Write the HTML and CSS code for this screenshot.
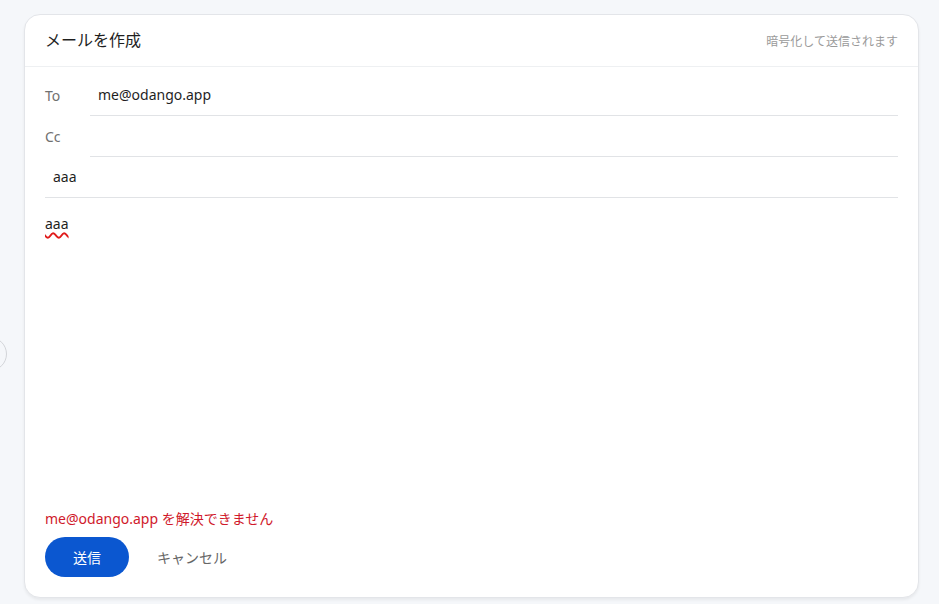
FILE: index.html
```html
<!DOCTYPE html>
<html lang="ja">
<head>
<meta charset="UTF-8">
<meta name="viewport" content="width=device-width, initial-scale=1.0">
<title>メールを作成</title>
<link rel="stylesheet" href="styles.css">
</head>
<body>

<!-- Sidebar toggle, mostly hidden off the left edge -->
<button class="side-toggle" aria-label="メニュー"></button>

<!-- Compose card -->
<div class="compose">

  <div class="compose-header">
    <h1 class="compose-title">メールを作成</h1>
    <span class="compose-note">暗号化して送信されます</span>
  </div>

  <div class="compose-fields">
    <div class="field-row">
      <label class="field-label">To</label>
      <div class="field-input">me@odango.app</div>
    </div>
    <div class="field-row">
      <label class="field-label">Cc</label>
      <div class="field-input"></div>
    </div>
    <div class="field-row subject">
      <div class="field-input">aaa</div>
    </div>
  </div>

  <!-- Message body -->
  <div class="compose-body"><span class="misspelled">aaa</span></div>

  <div class="compose-footer">
    <p class="error-text">me@odango.app を解決できません</p>
    <div class="actions">
      <button class="btn-send">送信</button>
      <button class="btn-cancel">キャンセル</button>
    </div>
  </div>

</div>

</body>
</html>
```

FILE: styles.css
```css
/* Page */
body {
  margin: 0;
  padding: 14px 20px 6px 24px;
  background-color: #f5f7fa;
  font-family: "Noto Sans", "Noto Sans CJK JP", sans-serif;
  color: #1f1f1f;
  overflow: hidden;
}

/* Round toggle peeking in at the left edge */
.side-toggle {
  position: absolute;
  left: -27px;
  top: 337px;
  width: 34px;
  height: 34px;
  border-radius: 50%;
  border: 1px solid #d3d5d9;
  background: transparent;
  padding: 0;
}

/* Card */
.compose {
  height: 584px;
  box-sizing: border-box;
  display: flex;
  flex-direction: column;
  background-color: #fff;
  border: 1px solid #e3e5e9;
  border-radius: 16px;
  box-shadow: 0 2px 3px rgba(0, 0, 0, 0.06);
}

.compose-header {
  height: 52px;
  flex-shrink: 0;
  box-sizing: border-box;
  display: flex;
  align-items: center;
  justify-content: space-between;
  padding: 0 20px;
  border-bottom: 1px solid #eef0f2;
}

.compose-title {
  margin: 0 0 3px;
  font-size: 16px;
  font-weight: 400;
  color: #1f1f1f;
}

.compose-note {
  font-size: 12px;
  color: #9a9a9a;
}

/* To / Cc / subject rows */
.compose-fields {
  padding: 8px 20px 0;
}

.field-row {
  display: flex;
  align-items: center;
  height: 41px;
}

.field-label {
  width: 45px;
  flex-shrink: 0;
  font-size: 14px;
  color: #707070;
}

.field-input {
  flex: 1;
  height: 40px;
  line-height: 40px;
  padding: 0 8px;
  font-size: 14px;
  color: #1f1f1f;
  border-bottom: 1px solid #e1e3e6;
}

/* Body text */
.compose-body {
  flex: 1;
  padding: 16px 20px 0;
  font-size: 14px;
  line-height: 20px;
}

.misspelled {
  text-decoration: underline wavy #e01b1b;
  text-decoration-thickness: 1.5px;
  text-underline-offset: 3px;
}

/* Error + buttons */
.compose-footer {
  padding: 0 20px 20px;
}

.error-text {
  margin: 0 0 8px;
  font-size: 14px;
  line-height: 20px;
  color: #d0192b;
}

.actions {
  display: flex;
  align-items: center;
  gap: 12px;
}

.btn-send {
  width: 84px;
  height: 40px;
  border: none;
  border-radius: 20px;
  background-color: #0b57d0;
  color: #fff;
  font-family: inherit;
  font-size: 14px;
  cursor: pointer;
}

.btn-cancel {
  height: 40px;
  padding: 0 16px;
  border: none;
  background: none;
  color: #666;
  font-family: inherit;
  font-size: 14px;
  cursor: pointer;
}
```
